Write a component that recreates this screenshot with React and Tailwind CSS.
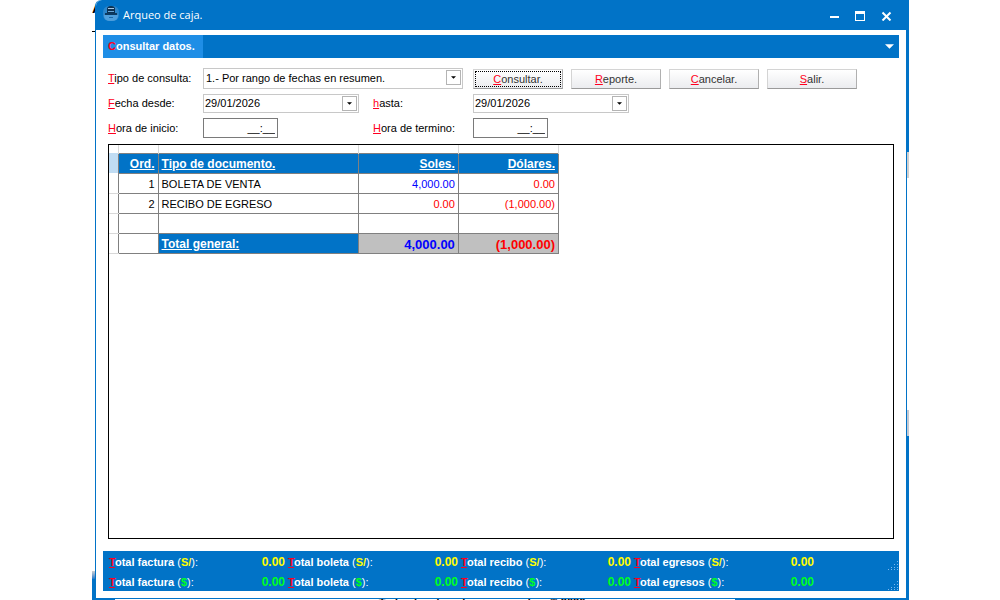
import { Fragment } from "react";

const rows = [
  { ord: "1", tipo: "BOLETA DE VENTA", soles: "4,000.00", dolares: "0.00", solesColor: "text-[#0000ff]", dolaresColor: "text-[#ff0000]" },
  { ord: "2", tipo: "RECIBO DE EGRESO", soles: "0.00", dolares: "(1,000.00)", solesColor: "text-[#ff0000]", dolaresColor: "text-[#ff0000]" },
];

const totals = ["factura", "boleta", "recibo", "egresos"];

function Hot({ text }) {
  return (
    <>
      <span className="text-[#ff0020] underline">{text[0]}</span>
      {text.slice(1)}
    </>
  );
}

function Arrow({ className }) {
  return (
    <svg className={className} viewBox="0 0 10 5" aria-hidden="true">
      <path d="M0 0h10L5 5z" fill="currentColor" />
    </svg>
  );
}

function DropButton() {
  return (
    <span className="pointer-events-none absolute right-0.5 top-0.5 flex h-[15px] w-[15px] items-center justify-center border border-[#b4b4b4] bg-white">
      <Arrow className="h-[3px] w-[5px]" />
    </span>
  );
}

function DateBox({ id }) {
  return (
    <div className="relative w-[156px]">
      <input id={id} type="text" defaultValue="29/01/2026" className="block h-[19px] w-full border border-[#c8c8c8] bg-white px-px pb-0.5 outline-none" />
      <DropButton />
    </div>
  );
}

function TimeBox({ id }) {
  return (
    <input id={id} type="text" defaultValue="__:__" className="h-5 w-[75px] border border-[#7a7a7a] bg-white px-0.5 text-right outline-none" />
  );
}

function Button({ text, focused }) {
  return (
    <button
      type="button"
      className="h-5 w-[90px] shrink-0 border border-[#d4d4d4] border-b-[#9a9a9a] border-r-[#b0b0b0] bg-linear-to-b from-white to-[#ebecef] p-px text-[#333]"
    >
      <span className={focused ? "block h-full border border-dotted border-black" : "block h-full border border-transparent"}>
        <Hot text={text} />
      </span>
    </button>
  );
}

function Grip() {
  return (
    <svg className="h-3 w-3 self-end" viewBox="0 0 12 12" fill="#7db8ec" aria-hidden="true">
      <path d="M10 2h1v1h-1zM7 5h1v1h-1zM10 5h1v1h-1zM4 8h1v1h-1zM7 8h1v1h-1zM10 8h1v1h-1zM1 10h1v1h-1zM4 10h1v1h-1zM7 10h1v1h-1zM10 10h1v1h-1z" />
    </svg>
  );
}

function TitleBar() {
  return (
    <header className="flex h-[30px] items-center rounded-tl-md bg-[#0173c7] pl-[7px] pr-[11px] text-white">
      <svg className="mb-1 h-[17px] w-4" viewBox="0 0 16 17" aria-hidden="true">
        <rect x="0" y="1" width="16" height="15" rx="6" fill="#2b86cc" />
        <path d="M1 10h14v1q0 5-7 5t-7-5z" fill="#4f9fdc" />
        <path d="M4 4q0-3 4-3t4 3v4H4z" fill="#0b3152" />
        <path d="M5 3h6v1H5z" fill="#a9c9e4" />
        <path d="M2 8h12v2H2z" fill="#0d3a61" />
        <path d="M5 6h6v1H5z" fill="#6ba6d6" />
        <path d="M6 12h4v1H6z" fill="#1d6aab" />
      </svg>
      <h1 className="ml-1 flex-1 font-['Open_Sans',sans-serif] text-[11px] leading-4">Arqueo de caja.</h1>
      <div className="flex gap-2">
        <button type="button" aria-label="Minimizar" className="flex h-[18px] w-[18px] items-center justify-center">
          <svg className="h-[11px] w-[11px]" viewBox="0 0 11 11"><path d="M1 6h9v2H1z" fill="white" /></svg>
        </button>
        <button type="button" aria-label="Maximizar" className="flex h-[18px] w-[18px] items-center justify-center">
          <svg className="h-[11px] w-[11px]" viewBox="0 0 11 11"><path d="M0 1h10v10H0zM1 4v6h8V4z" fill="white" fillRule="evenodd" /></svg>
        </button>
        <button type="button" aria-label="Cerrar" className="flex h-[18px] w-[18px] items-center justify-center">
          <svg className="h-[11px] w-[11px]" viewBox="0 0 11 11"><path d="M1.5 2.5l8 8M9.5 2.5l-8 8" stroke="white" strokeWidth="2" /></svg>
        </button>
      </div>
    </header>
  );
}

function Filters() {
  return (
    <form className="grid grid-cols-[95px_170px_100px_1fr] items-center gap-y-[5px] pl-[5px] pt-2.5">
      <label htmlFor="tipo"><Hot text="Tipo de consulta:" /></label>
      <div className="relative col-span-2 w-[260px]">
        <select id="tipo" className="block h-[21px] w-full appearance-none border border-[#c8c8c8] bg-white px-0.5 outline-none">
          <option>1.- Por rango de fechas en resumen.</option>
        </select>
        <DropButton />
      </div>
      <div className="flex gap-2">
        <Button text="Consultar." focused />
        <Button text="Reporte." />
        <Button text="Cancelar." />
        <Button text="Salir." />
      </div>
      <label htmlFor="desde"><Hot text="Fecha desde:" /></label>
      <DateBox id="desde" />
      <label htmlFor="hasta"><Hot text="hasta:" /></label>
      <DateBox id="hasta" />
      <label htmlFor="inicio"><Hot text="Hora de inicio:" /></label>
      <TimeBox id="inicio" />
      <label htmlFor="termino"><Hot text="Hora de termino:" /></label>
      <TimeBox id="termino" />
    </form>
  );
}

function Report() {
  const cell = "border border-[#808080] px-[3px] pt-0.5";
  const head = "border border-[#808080] px-[3px] pt-0.5 text-[12px] font-bold underline";
  const stub = "border-b border-[#d8d8d8]";
  return (
    <table className="w-[450px] table-fixed border-collapse">
      <colgroup>
        <col className="w-[9px]" />
        <col className="w-[40px]" />
        <col className="w-[200px]" />
        <col className="w-[100px]" />
        <col className="w-[100px]" />
      </colgroup>
      <tbody>
        <tr className="h-2">
          <td />
          <td className="border-x border-[#d8d8d8]" />
          <td className="border-x border-[#d8d8d8]" />
          <td className="border-x border-[#d8d8d8]" />
          <td className="border-x border-[#d8d8d8]" />
        </tr>
        <tr className="h-5 bg-[#0173c7] text-white">
          <td className="bg-[#c0dcf3]" />
          <th scope="col" className={`${head} text-right`}>Ord.</th>
          <th scope="col" className={`${head} text-left`}>Tipo de documento.</th>
          <th scope="col" className={`${head} text-right`}>Soles.</th>
          <th scope="col" className={`${head} text-right`}>Dólares.</th>
        </tr>
        {rows.map((row) => (
          <tr key={row.ord} className="h-5">
            <td className={stub} />
            <td className={`${cell} text-right`}>{row.ord}</td>
            <td className={cell}>{row.tipo}</td>
            <td className={`${cell} text-right ${row.solesColor}`}>{row.soles}</td>
            <td className={`${cell} text-right ${row.dolaresColor}`}>{row.dolares}</td>
          </tr>
        ))}
        <tr className="h-5">
          <td className={stub} />
          <td className={cell} />
          <td className={cell} />
          <td className={cell} />
          <td className={cell} />
        </tr>
        <tr className="h-5 font-bold">
          <td className={stub} />
          <td className={cell} />
          <th scope="row" className={`${head} bg-[#0173c7] text-left text-white`}>Total general:</th>
          <td className={`${cell} bg-[#c0c0c0] text-right text-[13px] text-[#0000ff]`}>4,000.00</td>
          <td className={`${cell} bg-[#c0c0c0] text-right text-[13px] text-[#ff0000]`}>(1,000.00)</td>
        </tr>
      </tbody>
    </table>
  );
}

function TotalsRow({ symbol, color }) {
  return (
    <div className="flex h-5 items-center pl-1.5">
      <div className="grid flex-1 grid-cols-[90px_89px_90px_83px_90px_83px_94px_89px] items-center whitespace-nowrap pt-0.5">
        {totals.map((name) => (
          <Fragment key={name}>
            <span className="font-bold text-white">
              <Hot text={`Total ${name} `} />
              <span className="font-normal">(</span>
              <span className={color}>{symbol}</span>
              <span className="font-normal">):</span>
            </span>
            <span className={`pr-[3px] text-right text-[12px] font-bold ${color}`}>0.00</span>
          </Fragment>
        ))}
      </div>
      <Grip />
    </div>
  );
}

// slivers of the page that show behind the window
function LeftEdge() {
  return (
    <div className="flex w-[3px] flex-col justify-between overflow-hidden" aria-hidden="true">
      <div>
        <p className="text-[15px] font-bold leading-[15px]">A</p>
        <div className="mt-4 h-px bg-black" />
      </div>
      <div className="h-7 bg-linear-to-b from-[#d0d0d0] to-[#0173c7] to-30%" />
    </div>
  );
}

function RightEdge() {
  return (
    <div className="flex w-0.5 flex-col" aria-hidden="true">
      <div className="h-[152px] bg-[#0173c7]" />
      <div className="h-[26px] bg-[#cfcfcf]" />
      <div className="flex-1" />
      <div className="h-[26px] bg-[#c4c9d2]" />
      <div className="h-[163px] bg-[#0173c7]" />
    </div>
  );
}

function BottomEdge() {
  return (
    <div className="grid h-px grid-cols-[23px_1fr_174px] overflow-hidden" aria-hidden="true">
      <div className="h-px bg-[#0173c7]" />
      <p className="pl-[114px] text-center text-[11px] font-bold leading-[7px]">Todos los derechos reservados. © 2026</p>
      <div className="h-px bg-[#0173c7]" />
    </div>
  );
}

export default function App() {
  return (
    <div className="flex min-h-screen flex-col bg-white pl-[92px] pr-[91px] font-['Liberation_Sans',Arial,sans-serif] text-[11px] leading-[15px] text-black">
      <div className="flex flex-1">
        <LeftEdge />
        <main className="flex min-w-0 flex-1 flex-col rounded-tl-md border-b border-l border-r border-[#0173c7] bg-white">
          <TitleBar />
          <div className="flex flex-1 flex-col px-[7px] pb-[7px] pt-[5px]">
            <nav className="flex h-[23px] items-center justify-between bg-[#0173c7] pr-[5px] font-bold text-white">
              <a href="#consultar" className="flex h-full w-[100px] items-center bg-[#1f8ee6] pl-[5px]">
                <span className="text-[#ff0020]">C</span>onsultar datos.
              </a>
              <button type="button" aria-label="Opciones"><Arrow className="h-[5px] w-[9px]" /></button>
            </nav>
            <Filters />
            <section className="mx-[5px] mt-1.5 min-h-[200px] flex-1 border border-black">
              <Report />
            </section>
            <footer className="mt-3 bg-[#0173c7]">
              <TotalsRow symbol="S/" color="text-[#ffff00]" />
              <TotalsRow symbol="$" color="text-[#00ff20]" />
            </footer>
          </div>
        </main>
        <RightEdge />
      </div>
      <BottomEdge />
    </div>
  );
}
